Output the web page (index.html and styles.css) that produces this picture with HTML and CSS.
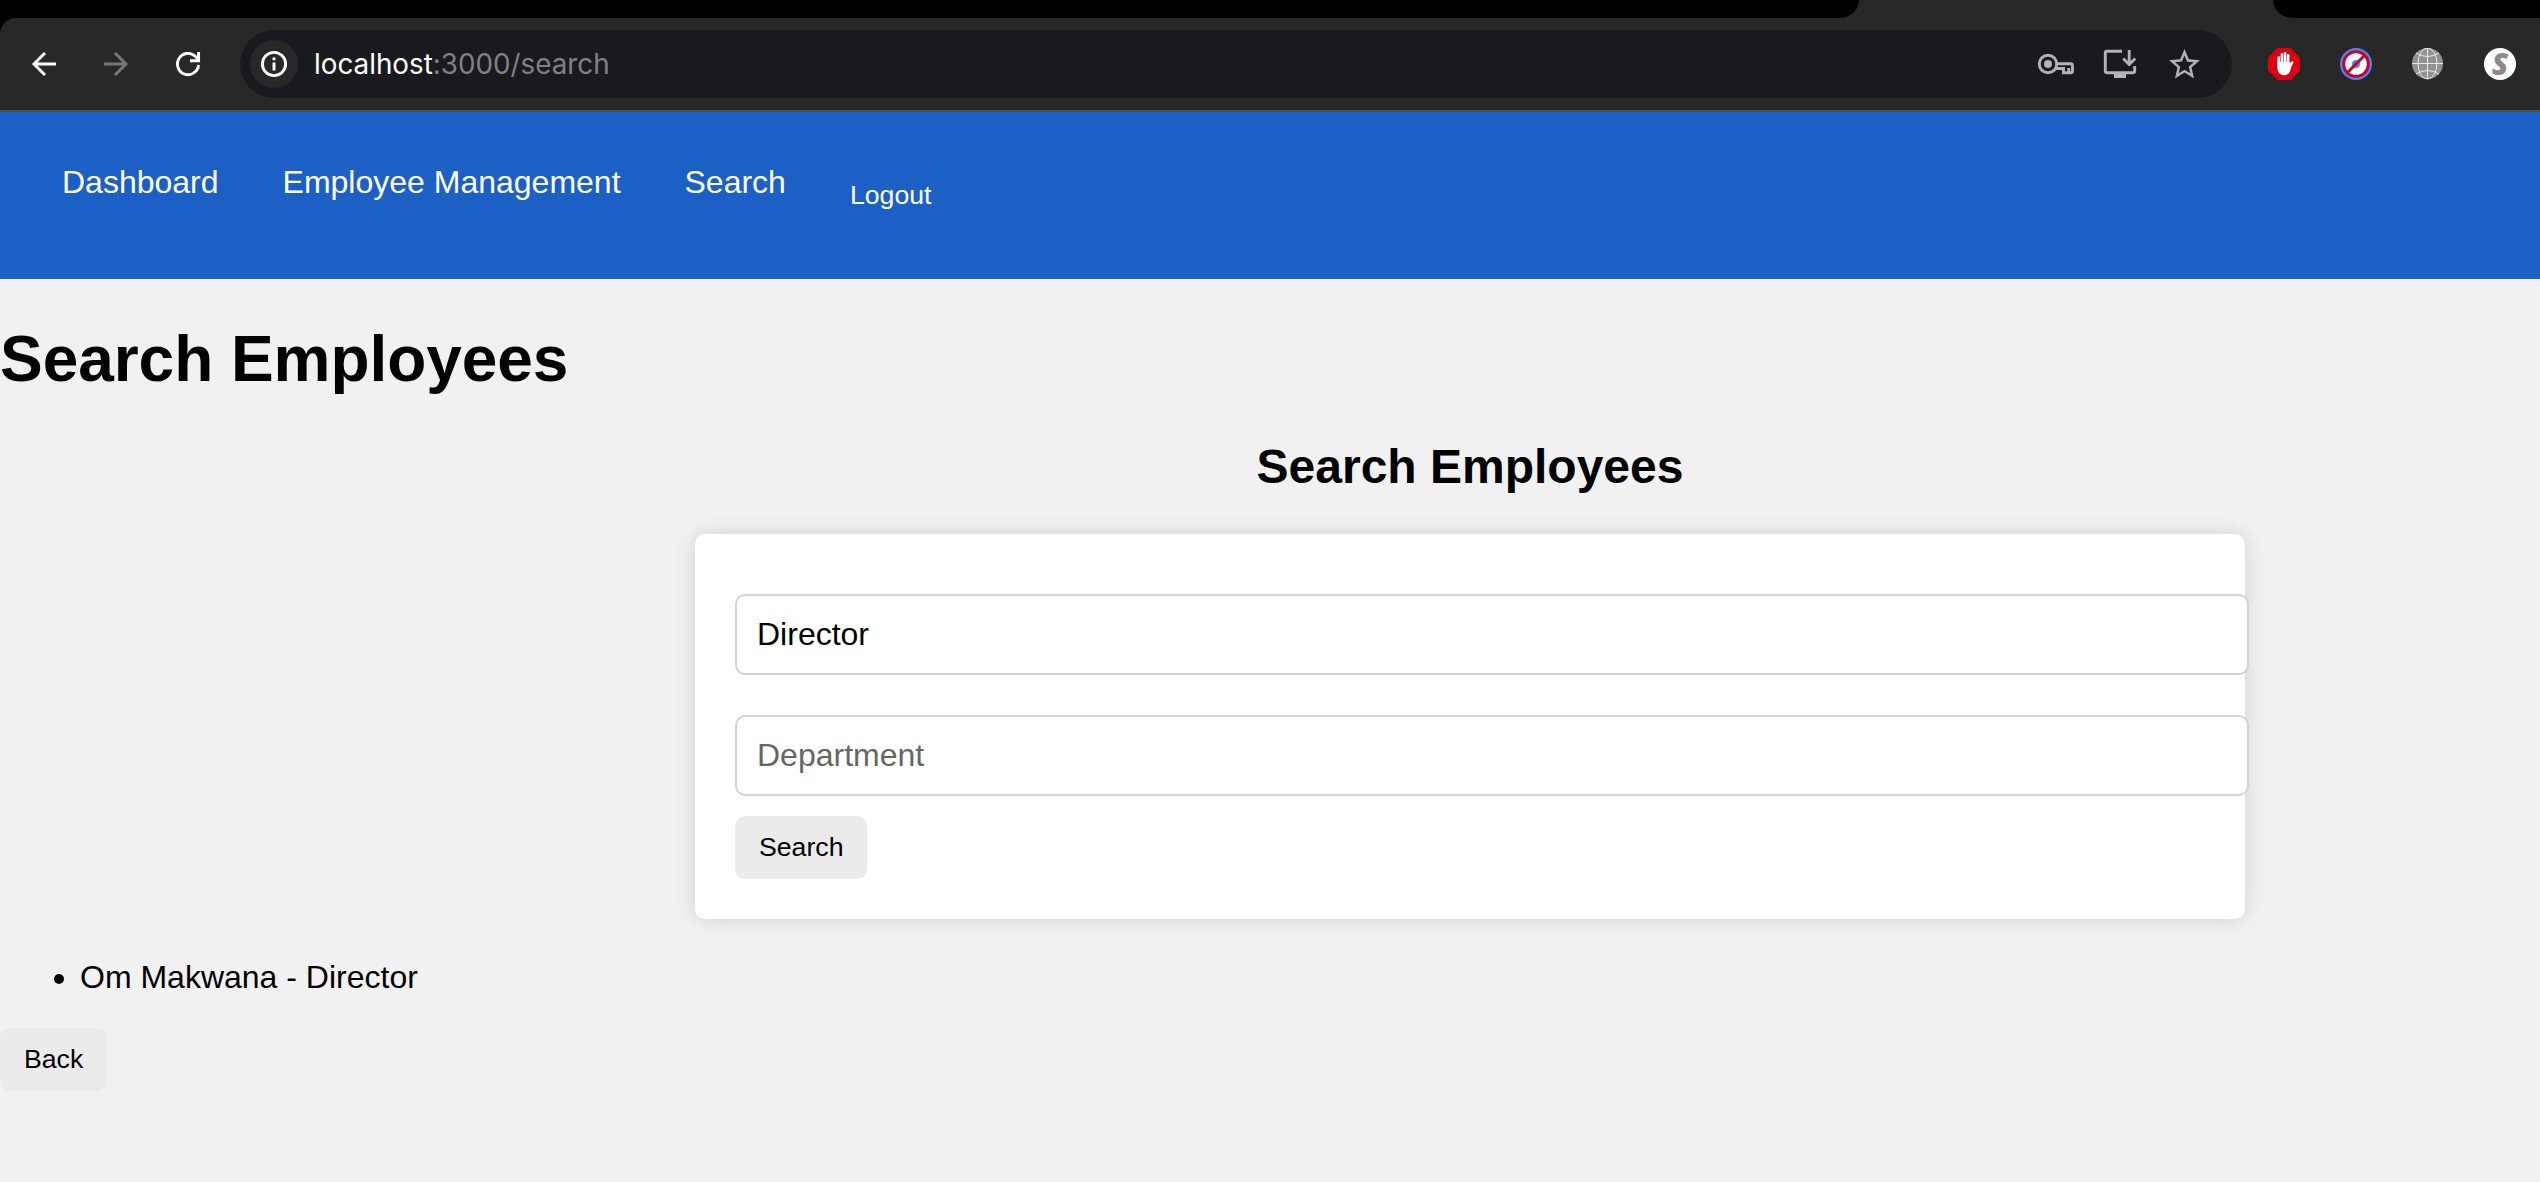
FILE: index.html
```html
<!DOCTYPE html>
<html lang="en">
<head>
<meta charset="utf-8">
<title>Search Employees</title>
<link rel="stylesheet" href="styles.css">
</head>
<body>
<header class="browser">
  <div class="tabs"><div class="tabs-left"></div><div class="tab-active"></div><div class="tabs-right"></div></div>
  <div class="toolbar">
    <svg class="nav-icon back" viewBox="0 0 32 32"><path d="M28 16H6M17 5L6 16l11 11"/></svg>
    <svg class="nav-icon forward" viewBox="0 0 32 32"><path d="M4 16h22M15 5L26 16 15 27"/></svg>
    <svg class="nav-icon reload" viewBox="0 0 32 32"><path d="M26.600 17A10.600 10.600 0 1 1 23.500 8.500L26 11M26.600 4v8.700H18"/></svg>
    <div class="address">
      <span class="site-info"><svg viewBox="0 0 32 32"><circle cx="16" cy="16" r="11.600"/><path d="M16 14.500v8M16 9.500v2.800"/></svg></span>
      <span class="url"><span class="host">localhost</span>:3000/search</span>
      <svg class="key" viewBox="0 0 40 32"><circle cx="12" cy="16" r="8.700"/><path d="M20.500 15.800H34.500q2 0 2 2V23q0 1.700-1.700 1.700H27.500V20.500H20M32.700 20v4"/><circle class="solid" cx="12" cy="16" r="4"/></svg>
      <svg class="install" viewBox="0 0 40 32"><path d="M22 3.300H7q-1.700 0-1.700 1.700V23q0 1.700 1.700 1.700H33q1.700 0 1.700-1.700V18M29.200 2v14M23.200 10.500l6 6 6-6"/><path class="solid" d="M14 25h12v5H14z"/></svg>
      <svg class="star" viewBox="0 0 24 24"><path class="solid" d="M22 9.240l-7.190-.62L12 2 9.190 8.630 2 9.240l5.460 4.730L5.820 21 12 17.270 18.180 21l-1.630-7.030L22 9.240zM12 15.400l-3.760 2.270 1-4.280-3.320-2.880 4.380-.38L12 6.100l1.710 4.040 4.380.38-3.320 2.880 1 4.280L12 15.400z"/></svg>
    </div>
    <div class="extensions">
      <svg viewBox="0 0 32 32"><path fill="#df0010" d="M9.500 0h13L32 9.500v13L22.500 32h-13L0 22.500v-13z"/><path d="M10.700 9.500V18M13.900 6.300V18M17.100 5.300V18M20.200 7.300V18M20.500 21.500l3.600-7" stroke="#fff" stroke-width="2.600" stroke-linecap="round"/><path fill="#fff" d="M9.400 14h12.100l1.500 4-.5 4c-1 3.500-3.500 5.200-6.500 5.200s-6.600-2-6.600-7.500z"/></svg>
      <svg viewBox="0 0 32 32"><circle cx="16" cy="16" r="16" fill="#4e84f4"/><circle cx="16" cy="16" r="12.300" fill="#fff" stroke="#cb0029" stroke-width="3"/><circle cx="16" cy="16" r="4" fill="#4e84f4"/><path d="M7.500 24.500l17-17" stroke="#cb0029" stroke-width="3"/></svg>
      <svg viewBox="0 0 32 32"><circle cx="15.500" cy="15.500" r="15.500" fill="#929292"/><g fill="none" stroke="#e9e9e9" stroke-width="1"><path d="M15.500 0v31M0 15.500h31M4 5q11.500 7 23 0M4 26q11.500-7 23 0"/><ellipse cx="15.500" cy="15.500" rx="9.500" ry="15.500"/></g></svg>
      <span class="letter">S</span>
    </div>
  </div>
</header>
<nav class="navbar">
  <a>Dashboard</a><a>Employee Management</a><a>Search</a><button class="logout">Logout</button>
</nav>
<main>
  <h1>Search Employees</h1>
  <section class="search">
    <h2>Search Employees</h2>
    <form class="card">
      <input type="text" value="Director">
      <input type="text" placeholder="Department">
      <button type="button" class="button">Search</button>
    </form>
  </section>
  <ul><li>Om Makwana - Director</li></ul>
  <button class="button">Back</button>
</main>
</body>
</html>
```
FILE: styles.css
```css
body {
  margin: 0;
  height: 1182px;
  overflow: hidden;
  background: #f1f1f1;
  color: #000;
  font-family: "Liberation Sans", Arial, sans-serif;
  font-size: 32px;
}
.browser {
  height: 112px;
  box-sizing: border-box;
  border-bottom: 2px solid #4b4b4b;
  background: #282828;
}
.tabs { display: flex; height: 18px; }
.tabs-left { width: 1859px; background: #000; border-bottom-right-radius: 20px 18px; }
.tab-active { width: 414px; }
.tabs-right { flex: 1; background: #000; border-bottom-left-radius: 20px 18px; }
.toolbar {
  display: flex;
  align-items: center;
  height: 92px;
  padding-left: 28px;
  background: radial-gradient(circle at 100% 100%, #282828 15.500px, #000 16.500px) 0 0 / 16px 16px no-repeat;
}
.nav-icon { width: 32px; height: 32px; margin-right: 40px; fill: none; stroke: #fff; stroke-width: 2.900; }
.forward { stroke: #777; }
.reload { margin-right: 36px; }
.address {
  display: flex;
  align-items: center;
  width: 1992px;
  height: 68px;
  box-sizing: border-box;
  padding: 0 29.500px 0 10px;
  border-radius: 34px;
  background: #191a1d;
}
.address svg { fill: none; stroke: #b3b3b3; stroke-width: 2.900; }
.address .solid { fill: #b3b3b3; stroke: none; }
.site-info { display: flex; align-items: center; justify-content: center; width: 48px; height: 48px; border-radius: 50%; background: #282828; }
.address .site-info svg { width: 32px; height: 32px; stroke: #fff; }
.url {
  flex: 1;
  margin-left: 16px;
  color: #808080;
  font-family: Inter, sans-serif;
  font-size: 27.800px;
}
.host { color: #fff; }
.key { width: 40px; height: 32px; margin-right: 24px; }
.install { width: 40px; height: 32px; margin-right: 25.500px; }
.star { width: 37px; height: 37px; }
.extensions { display: flex; gap: 40px; margin-left: 36px; }
.extensions svg { width: 32px; height: 32px; fill: none; }
.letter {
  width: 32px;
  height: 32px;
  border-radius: 50%;
  background: #fff;
  color: #8a8a8a;
  font: italic 800 30px/32px "Open Sans", sans-serif;
  text-align: center;
}
.navbar {
  display: flex;
  align-items: flex-start;
  gap: 64px;
  height: 167px;
  box-sizing: border-box;
  padding: 52px 62px 0;
  background: #1c60c6;
  color: #fff;
}
.navbar a { line-height: 37px; }
.logout { margin: 16px 0 0; padding: 0; border: 0; background: none; color: #fff; font: 26.667px/31px "Liberation Sans", Arial, sans-serif; }
h1 { margin: 43px 0; font-size: 64px; line-height: 74px; letter-spacing: -.05px; }
.search { width: 1550px; margin-left: 695px; }
h2 { margin: 0 0 40px; font-size: 48px; line-height: 55px; text-align: center; }
.card {
  display: flex;
  flex-direction: column;
  align-items: flex-start;
  height: 385px;
  box-sizing: border-box;
  padding: 60px 40px 40px;
  border-radius: 10px;
  background: #fff;
  box-shadow: 0 0 20px rgba(0, 0, 0, .13);
}
input {
  width: 1514px;
  height: 81px;
  box-sizing: border-box;
  margin: 0 0 40px;
  padding: 0 20px;
  border: 2px solid #d3d3d3;
  border-radius: 10px;
  background: #fff;
  color: #000;
  font: 32px "Liberation Sans", Arial, sans-serif;
}
input::placeholder { color: #666; }
input + input { margin-bottom: 20px; }
.button {
  display: block;
  height: 63px;
  margin: 0;
  padding: 0 24px;
  border: 0;
  border-radius: 10px;
  background: #ebebeb;
  color: #000;
  font: 26.667px "Liberation Sans", Arial, sans-serif;
}
ul { margin: 40px 0 32px; padding-left: 80px; line-height: 37px; }
```
